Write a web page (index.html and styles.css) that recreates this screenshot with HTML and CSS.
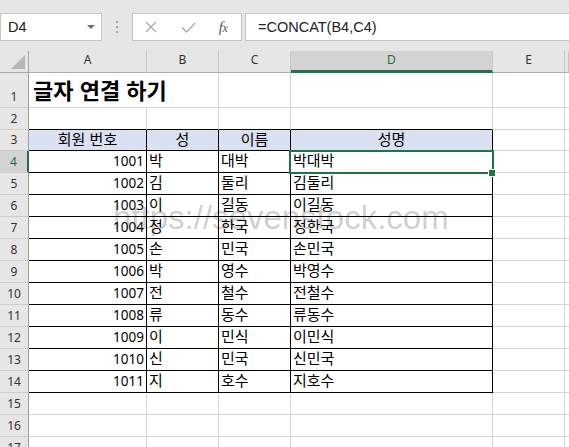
FILE: index.html
```html
<!DOCTYPE html>
<html lang="ko">
<head>
<meta charset="utf-8">
<title>글자 연결 하기</title>
<link rel="stylesheet" href="styles.css">
</head>
<body>
<div class="topbar">
  <div class="namebox"><span>D4</span>
    <svg class="dd" width="8" height="4" viewBox="0 0 8 4"><path d="M0 0H8L4 4Z" fill="#6e6e6e"/></svg>
  </div>
  <div class="dots">
    <svg width="4" height="14" viewBox="0 0 4 14"><rect x="1" y="0" width="2" height="2" fill="#a8a8a8"/><rect x="1" y="5" width="2" height="2" fill="#a8a8a8"/><rect x="1" y="10" width="2" height="2" fill="#a8a8a8"/></svg>
  </div>
  <div class="fxbtns">
    <span class="slot s1"><svg width="12" height="12" viewBox="0 0 12 12"><path d="M1 1L11 11M11 1L1 11" stroke="#a9a9a9" stroke-width="1.3" fill="none"/></svg></span>
    <span class="slot s2"><svg width="15" height="11" viewBox="0 0 15 11"><path d="M1 5.5L5.5 10L14 1" stroke="#a9a9a9" stroke-width="1.4" fill="none"/></svg></span>
    <span class="slot s3 fx">f<span class="x">x</span></span>
  </div>
  <div class="formula">=CONCAT(B4,C4)</div>
</div>

<div class="sheet">
  <div class="row hdr">
    <div class="corner"><svg width="14" height="14" viewBox="0 0 14 14"><path d="M14 0V14H0Z" fill="#b7b7b7"/></svg></div>
    <div class="ch">A</div><div class="ch">B</div><div class="ch">C</div><div class="ch act">D</div><div class="ch">E</div><div class="ch"></div>
  </div>
  <div class="row r1">
    <div class="rh">1</div>
    <div class="c title">글자 연결 하기</div><div class="c"></div><div class="c"></div><div class="c"></div><div class="c"></div><div class="c"></div>
  </div>
  <div class="row">
    <div class="rh">2</div>
    <div class="c tb"></div><div class="c tb"></div><div class="c tb"></div><div class="c tb"></div><div class="c"></div><div class="c"></div>
  </div>
  <div class="row r3">
    <div class="rh">3</div>
    <div class="c t th">회원 번호</div><div class="c t th">성</div><div class="c t th">이름</div><div class="c t th">성명</div><div class="c"></div><div class="c"></div>
  </div>
  <div class="row">
    <div class="rh act">4</div>
    <div class="c t num">1001</div><div class="c t">박</div><div class="c t">대박</div><div class="c t sel">박대박<span class="selbox"></span><span class="handle"></span></div><div class="c"></div><div class="c"></div>
  </div>
  <div class="row">
    <div class="rh">5</div>
    <div class="c t num">1002</div><div class="c t">김</div><div class="c t">둘리</div><div class="c t">김둘리</div><div class="c"></div><div class="c"></div>
  </div>
  <div class="row">
    <div class="rh">6</div>
    <div class="c t num">1003</div><div class="c t">이</div><div class="c t">길동</div><div class="c t">이길동</div><div class="c"></div><div class="c"></div>
  </div>
  <div class="row">
    <div class="rh">7</div>
    <div class="c t num">1004</div><div class="c t">정</div><div class="c t">한국</div><div class="c t">정한국</div><div class="c"></div><div class="c"></div>
  </div>
  <div class="row">
    <div class="rh">8</div>
    <div class="c t num">1005</div><div class="c t">손</div><div class="c t">민국</div><div class="c t">손민국</div><div class="c"></div><div class="c"></div>
  </div>
  <div class="row">
    <div class="rh">9</div>
    <div class="c t num">1006</div><div class="c t">박</div><div class="c t">영수</div><div class="c t">박영수</div><div class="c"></div><div class="c"></div>
  </div>
  <div class="row">
    <div class="rh">10</div>
    <div class="c t num">1007</div><div class="c t">전</div><div class="c t">철수</div><div class="c t">전철수</div><div class="c"></div><div class="c"></div>
  </div>
  <div class="row">
    <div class="rh">11</div>
    <div class="c t num">1008</div><div class="c t">류</div><div class="c t">동수</div><div class="c t">류동수</div><div class="c"></div><div class="c"></div>
  </div>
  <div class="row">
    <div class="rh">12</div>
    <div class="c t num">1009</div><div class="c t">이</div><div class="c t">민식</div><div class="c t">이민식</div><div class="c"></div><div class="c"></div>
  </div>
  <div class="row">
    <div class="rh">13</div>
    <div class="c t num">1010</div><div class="c t">신</div><div class="c t">민국</div><div class="c t">신민국</div><div class="c"></div><div class="c"></div>
  </div>
  <div class="row">
    <div class="rh">14</div>
    <div class="c t num">1011</div><div class="c t">지</div><div class="c t">호수</div><div class="c t">지호수</div><div class="c"></div><div class="c"></div>
  </div>
  <div class="row">
    <div class="rh">15</div>
    <div class="c"></div><div class="c"></div><div class="c"></div><div class="c"></div><div class="c"></div><div class="c"></div>
  </div>
  <div class="row">
    <div class="rh">16</div>
    <div class="c"></div><div class="c"></div><div class="c"></div><div class="c"></div><div class="c"></div><div class="c"></div>
  </div>
  <div class="row">
    <div class="rh">17</div>
    <div class="c"></div><div class="c"></div><div class="c"></div><div class="c"></div><div class="c"></div><div class="c"></div>
  </div>
</div>

<div class="watermark">https://sevenstock.com</div>
</body>
</html>
```

FILE: styles.css
```css
html, body {
  margin: 0;
  padding: 0;
}
body {
  width: 569px;
  height: 447px;
  overflow: hidden;
  position: relative;
  background: #ffffff;
  font-family: "Noto Sans CJK KR", sans-serif;
  color: #000;
}

/* ---------- formula bar ---------- */
.topbar {
  display: flex;
  align-items: flex-start;
  height: 51px;
  box-sizing: border-box;
  padding-top: 13px;
  background: #e6e6e6;
}
.namebox {
  width: 102px;
  height: 28px;
  box-sizing: border-box;
  background: #fff;
  border: 1px solid #c6c6c6;
  display: flex;
  align-items: center;
  justify-content: space-between;
  padding: 0 6px 0 7px;
  font: 14.5px/26px "Liberation Sans", sans-serif;
  color: #222;
}
.dots {
  width: 30px;
  display: flex;
  justify-content: center;
  padding-top: 8px;
}
.dots svg { display: block; }
.fxbtns {
  width: 110px;
  height: 28px;
  box-sizing: border-box;
  background: #fff;
  border: 1px solid #c6c6c6;
  display: flex;
  align-items: center;
  padding-left: 6px;
}
.slot {
  width: 24px;
  height: 26px;
  display: flex;
  align-items: center;
  justify-content: center;
}
.s2 { margin-left: 13px; }
.s3 { margin-left: 11px; }
.fx {
  font: italic 15px/26px "Liberation Serif", serif;
  color: #555;
  letter-spacing: -0.5px;
}
.fx .x {
  font-size: 12px;
  position: relative;
  top: 1px;
}
.formula {
  margin-left: 3px;
  flex: 1;
  height: 28px;
  box-sizing: border-box;
  background: #fff;
  border: 1px solid #c6c6c6;
  border-right: none;
  padding-left: 12px;
  font: 14.5px/26px "Liberation Sans", sans-serif;
  color: #222;
  white-space: nowrap;
}

/* ---------- grid ---------- */
.row {
  display: grid;
  grid-template-columns: 29px 118px 72px 72px 202px 72px 1fr;
  height: 22px;
}
.row.r1 { height: 35px; }
.row.r3 { height: 21px; }
.row > div {
  box-sizing: border-box;
  border-right: 1px solid #d4d4d4;
  border-bottom: 1px solid #d4d4d4;
}

.corner {
  background: #e6e6e6;
  border-right-color: #a9a9a9 !important;
  border-bottom-color: #a9a9a9 !important;
  display: flex;
  align-items: flex-end;
  justify-content: flex-end;
  padding: 0 3px 3px 0;
}
.corner svg { display: block; }
.ch {
  background: #e6e6e6;
  border-right-color: #c8c8c8 !important;
  border-bottom-color: #ababab !important;
  text-align: center;
  font: 12px/17px "Noto Sans", sans-serif;
  color: #333;
}
.ch.act {
  background: #d3d3d3;
  border-bottom: 3px solid #217346 !important;
  color: #1e6b40;
}
.rh {
  background: #e6e6e6;
  border-right-color: #9e9e9e !important;
  border-bottom-color: #cdcdcd !important;
  display: flex;
  align-items: flex-end;
  justify-content: center;
  padding-bottom: 2px;
  font: 12px/16px "Noto Sans", sans-serif;
  color: #333;
}
.rh.act {
  background: #d3d3d3;
  border-right: 2px solid #217346 !important;
  color: #1e6b40;
}

.c {
  font-size: 15px;
  line-height: 18px;
  padding: 0 2px;
  white-space: nowrap;
  overflow: visible;
}
.title {
  font-weight: 700;
  font-size: 22px;
  line-height: 22px;
  display: flex;
  align-items: flex-end;
  padding: 0 0 7px 4px;
  border-right-color: transparent !important;
}
.tb { border-bottom-color: #000 !important; }
.t {
  border-right-color: #000 !important;
  border-bottom-color: #000 !important;
}
.th {
  background: #d9e1f2;
  text-align: center;
}
.num {
  text-align: right;
  font-family: "Noto Sans", sans-serif;
  font-size: 13.5px;
  padding-top: 1px;
}

.sel { position: relative; }
.selbox {
  position: absolute;
  top: -1px;
  left: -2px;
  right: -2px;
  bottom: -2px;
  border: 2px solid #217346;
}
.handle {
  position: absolute;
  right: -3px;
  bottom: -4px;
  width: 6px;
  height: 6px;
  background: #217346;
  box-shadow: 0 0 0 1px #fff;
}

.watermark {
  position: absolute;
  left: 113px;
  top: 201px;
  font: 33px/33px "Liberation Sans", sans-serif;
  color: rgba(0, 0, 0, 0.2);
  white-space: nowrap;
  pointer-events: none;
}
```
